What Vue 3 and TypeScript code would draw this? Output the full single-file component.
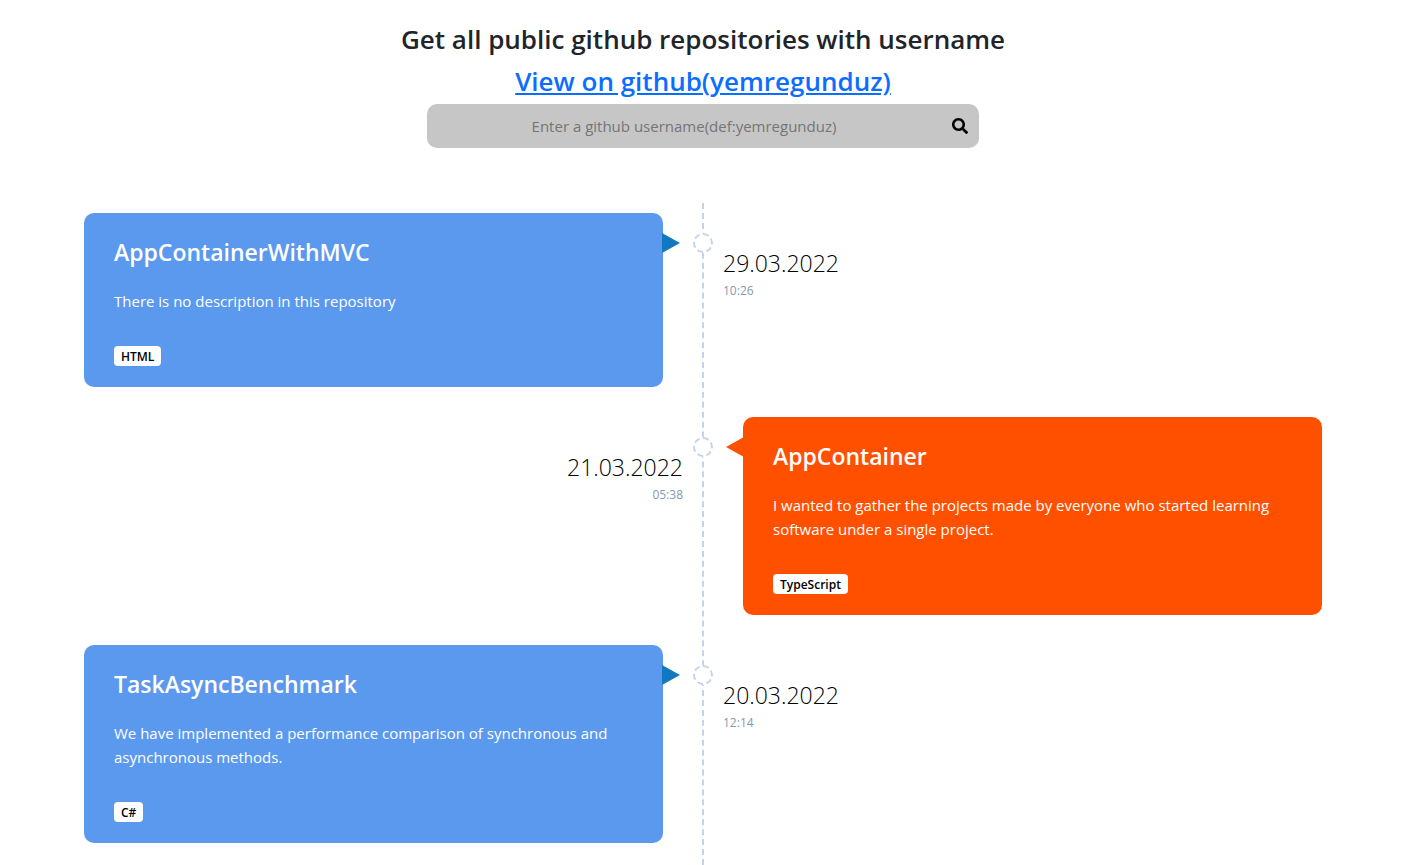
<script setup lang="ts">
import { ref } from 'vue'

interface Repository {
  name: string
  description: string
  language: string
  date: string
  time: string
}

const username = ref('')

const repositories: Repository[] = [
  {
    name: 'AppContainerWithMVC',
    description: 'There is no description in this repository',
    language: 'HTML',
    date: '29.03.2022',
    time: '10:26',
  },
  {
    name: 'AppContainer',
    description:
      'I wanted to gather the projects made by everyone who started learning software under a single project.',
    language: 'TypeScript',
    date: '21.03.2022',
    time: '05:38',
  },
  {
    name: 'TaskAsyncBenchmark',
    description:
      'We have implemented a performance comparison of synchronous and asynchronous methods.',
    language: 'C#',
    date: '20.03.2022',
    time: '12:14',
  },
]
</script>

<template>
  <main class="page">
    <header class="header">
      <h1 class="heading">Get all public github repositories with username</h1>
      <h2 class="heading"><a class="profile" href="#">View on github(yemregunduz)</a></h2>
      <form class="search" @submit.prevent>
        <input
          v-model="username"
          class="search-input"
          type="text"
          aria-label="Github username"
          placeholder="Enter a github username(def:yemregunduz)"
        />
        <button class="search-button" type="submit" aria-label="Search">
          <svg class="search-icon" viewBox="0 0 512 512" aria-hidden="true">
            <path
              d="M505 442.7L405.3 343c-4.5-4.500-10.600-7-17-7H372c27.600-35.300 44-79.700 44-128C416 93.100 322.900 0 208 0S0 93.100 0 208s93.100 208 208 208c48.300 0 92.700-16.400 128-44v16.300c0 6.400 2.500 12.500 7 17l99.700 99.700c9.400 9.400 24.600 9.400 33.900 0l28.300-28.300c9.400-9.400 9.400-24.600.1-34zM208 336c-70.700 0-128-57.200-128-128 0-70.700 57.200-128 128-128 70.700 0 128 57.200 128 128 0 70.700-57.200 128-128 128z"
            />
          </svg>
        </button>
      </form>
    </header>

    <section class="timeline">
      <article v-for="repo in repositories" :key="repo.name" class="entry">
        <div class="card">
          <h3 class="card-title">{{ repo.name }}</h3>
          <p class="card-text">{{ repo.description }}</p>
          <span class="badge">{{ repo.language }}</span>
        </div>
        <span class="marker"></span>
        <div class="meta">
          <p class="date">{{ repo.date }}</p>
          <p class="time">{{ repo.time }}</p>
        </div>
      </article>
    </section>
  </main>
</template>

<style>
body {
  margin: 0;
  background: #fff;
}
</style>

<style scoped>
.page {
  box-sizing: border-box;
  display: flex;
  flex-direction: column;
  min-height: 100vh;
  padding: 22px 18px 0 0;
  font-family: 'Segoe UI', 'Open Sans', 'Noto Sans', sans-serif;
  color: #212529;
}

.header {
  display: flex;
  flex-direction: column;
  align-items: center;
}

.heading {
  margin: 0 0 8px;
  font-size: 26px;
  font-weight: 600;
  line-height: 34px;
  text-align: center;
}

.heading + .heading {
  margin-bottom: 6px;
}

.profile {
  color: #0d6efd;
  text-decoration: underline;
}

.search {
  box-sizing: border-box;
  display: flex;
  align-items: center;
  width: 552px;
  max-width: 100%;
  height: 44px;
  border-radius: 10px;
  background: #c6c6c6;
}

.search-input {
  flex: 1;
  min-width: 0;
  height: 100%;
  padding: 0;
  border: 0;
  outline: 0;
  background: transparent;
  font: inherit;
  font-size: 15px;
  text-align: center;
}

.search-input::placeholder {
  color: #757575;
  opacity: 1;
}

.search-button {
  display: flex;
  align-items: center;
  justify-content: center;
  width: 38px;
  height: 100%;
  padding: 0;
  border: 0;
  background: transparent;
  cursor: pointer;
}

.search-icon {
  width: 16px;
  height: 16px;
  fill: #000;
}

.timeline {
  position: relative;
  flex: 1;
  margin: 55px 84px 0;
  padding-top: 10px;
}

.timeline::before {
  content: '';
  position: absolute;
  top: 0;
  bottom: 0;
  left: 50%;
  margin-left: -1px;
  border-left: 2px dashed #c5d3e6;
}

.entry {
  position: relative;
  display: grid;
  grid-template-columns: 1fr 1fr;
  margin-bottom: 30px;
}

.entry:last-child {
  margin-bottom: 22px;
}

.card {
  position: relative;
  margin-right: 40px;
  padding: 24px 30px 21px;
  border-radius: 10px;
  background: #5b99ee;
  color: #fff;
}

.card::after {
  content: '';
  position: absolute;
  top: 20px;
  left: calc(100% - 1px);
  border: solid transparent;
  border-width: 10px 0 10px 18px;
  border-left-color: #1378be;
}

.card-title {
  margin: 0 0 22px;
  font-size: 23px;
  font-weight: 600;
  line-height: 30px;
}

.card-text {
  margin: 0 0 33px;
  font-size: 15px;
  line-height: 24px;
}

.badge {
  display: block;
  width: fit-content;
  padding: 2px 7px 0;
  border-radius: 4px;
  background: #fff;
  color: #000;
  font-size: 12px;
  font-weight: 600;
  line-height: 18px;
}

.marker {
  box-sizing: border-box;
  position: absolute;
  top: 20px;
  left: 50%;
  width: 20px;
  height: 20px;
  margin-left: -10px;
  border: 2px dashed #c5d3e6;
  border-radius: 50%;
  background: #fff;
}

.meta {
  padding: 35px 20px 0;
}

.date {
  margin: 0;
  color: #000;
  font-size: 23px;
  font-weight: 300;
  line-height: 30px;
}

.time {
  margin: 4px 0 0;
  color: #8798b0;
  font-size: 12px;
  line-height: 18px;
}

.entry:nth-child(even) .card {
  order: 2;
  margin: 0 0 0 40px;
  background: #ff5000;
}

.entry:nth-child(even) .card::after {
  right: calc(100% - 1px);
  left: auto;
  border-width: 10px 18px 10px 0;
  border-color: transparent #ff5000 transparent transparent;
}

.entry:nth-child(even) .meta {
  text-align: right;
}
</style>
